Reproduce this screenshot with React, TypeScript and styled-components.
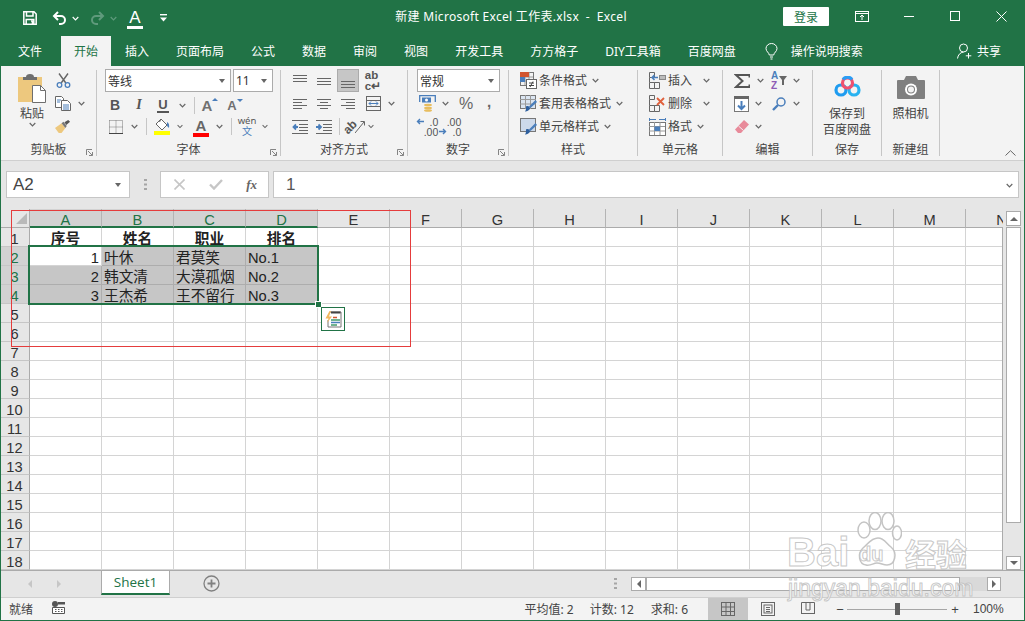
import React from "react";
import styled, { createGlobalStyle } from "styled-components";

const GREEN = "#217346";
const BLUE = "#4a7ebb";
const CJK = `"Noto Sans", "Noto Sans CJK SC", sans-serif`;
const CELLFONT = `"Liberation Sans", "Noto Sans CJK SC", sans-serif`;

const Global = createGlobalStyle`
  html, body { margin: 0; padding: 0; background: #fff; }
  * { box-sizing: border-box; }
  body { font-family: ${CJK}; font-size: 12px; }
`;

const Window = styled.div`
  position: relative; width: 1025px; height: 621px; overflow: hidden;
  display: flex; flex-direction: column;
  border: 1px solid ${GREEN}; border-top: 0;
`;

/* ---------- title bar ---------- */
const TitleBar = styled.div`
  height: 36px; background: ${GREEN}; color: #fff; flex: none; margin: 0 -1px;
  display: grid; grid-template-columns: 1fr auto 1fr; align-items: center;
`;
const Qat = styled.div`display: flex; align-items: center; padding-left: 23px;`;
const QatSlot = styled.span<{ $w: number; $ml?: number }>`
  width: ${p => p.$w}px; margin-left: ${p => p.$ml ?? 0}px; height: 20px;
  display: flex; align-items: center; justify-content: center; flex: none;
`;
const QatLetter = styled.span`
  font-family: "Liberation Sans", sans-serif; font-size: 17px; line-height: 15px; height: 19px; width: 16px;
  border-bottom: 3px solid #fff; text-align: center; color: #fff; margin-top: 2px;
`;
const WindowTitle = styled.div`font-size: 12px; white-space: pre; color: #fff; letter-spacing: .3px; margin: -5px 3px 0 0;`;
const WinControls = styled.div`display: flex; align-items: center; justify-content: flex-end; height: 100%;`;
const Login = styled.div`
  width: 46px; height: 19px; background: #fff; color: ${GREEN}; font-size: 12px; border-radius: 1px;
  display: flex; align-items: center; justify-content: center; margin-top: -3px;
`;
const WinBtn = styled.div<{ $w: number; $ml?: number }>`
  width: ${p => p.$w}px; margin-left: ${p => p.$ml ?? 0}px; display: flex; justify-content: center; margin-top: -4px;
`;

/* ---------- tabs ---------- */
const TabBar = styled.div`
  height: 30px; background: ${GREEN}; flex: none; display: flex; margin: 0 -1px; padding-left: 5px; gap: 1px;
`;
const Tab = styled.div<{ $on?: boolean; $ml?: number }>`
  padding: 0 13px; height: 30px; display: flex; align-items: center; white-space: nowrap;
  font-size: 12px; margin-left: ${p => p.$ml ?? 0}px;
  color: ${p => (p.$on ? GREEN : "#fff")}; background: ${p => (p.$on ? "#f3f3f3" : "transparent")};
`;
const TellMe = styled.div`display: flex; align-items: center; gap: 13px; color: #fff; font-size: 12px; margin-left: 15px;`;
const Share = styled.div`display: flex; align-items: center; gap: 5px; color: #fff; font-size: 12px; margin-left: auto; margin-right: 24px;`;

/* ---------- ribbon ---------- */
const Ribbon = styled.div`
  position: relative; height: 95px; flex: none; background: #f3f3f3; display: flex;
  border-bottom: 1px solid #cfcfcf;
`;
const Group = styled.div<{ $w: number }>`
  position: relative; width: ${p => p.$w}px; height: 94px; flex: none; padding-top: 3px;
  display: flex; flex-direction: column;
`;
const GroupBody = styled.div`height: 72px; flex: none;`;
const GroupLabel = styled.div`height: 17px; line-height: 18px; text-align: center; color: #444; font-size: 12px;`;
const Launcher = styled.span`position: absolute; right: 3px; bottom: 4px; width: 7px; height: 7px; display: flex;`;
const GroupSep = styled.div`width: 1px; height: 86px; margin-top: 4px; background: #c6c6c6; flex: none;`;
const Collapse = styled.span`position: absolute; right: 8px; bottom: 4px; display: flex;`;
const Row = styled.div<{ $h?: number; $pl?: number; $mt?: number }>`
  display: flex; align-items: center; height: ${p => p.$h ?? 23}px; padding-left: ${p => p.$pl ?? 0}px;
  margin-top: ${p => p.$mt ?? 0}px;
`;
const Tool = styled.span<{ $w: number; $ml?: number; $on?: boolean }>`
  width: ${p => p.$w}px; margin-left: ${p => p.$ml ?? 0}px; height: ${p => (p.$on ? "23px" : "100%")};
  display: flex; align-items: center; justify-content: center; flex: none; color: #555;
  background: ${p => (p.$on ? "#c6c6c6" : "transparent")}; ${p => (p.$on ? "border: 1px solid #ababab;" : "")}
`;
const VSep = styled.span<{ $ml: number }>`
  width: 1px; height: 17px; background: #c6c6c6; margin-left: ${p => p.$ml}px; flex: none;
`;
const ToolText = styled.span`color: #444; font-size: 12px; white-space: nowrap; margin: -1px 0 0 2px;`;
const Caret = styled.span<{ $ml?: number; $w?: number }>`
  width: ${p => p.$w ?? 8}px; margin-left: ${p => p.$ml ?? 0}px; display: flex; justify-content: center; flex: none;
`;
const SplitCols = styled.div`display: flex; padding-left: 8px;`;
const LargeCol = styled.div<{ $w: number }>`
  width: ${p => p.$w}px; display: flex; flex-direction: column; align-items: center; flex: none;
`;
const LargeText = styled.div`font-size: 12px; color: #444; line-height: 16px; text-align: center;`;
const LargeIcon = styled.div<{ $h: number; $pt: number }>`
  height: ${p => p.$h}px; padding-top: ${p => p.$pt}px; display: flex; justify-content: center;
`;
const ComboBox = styled.div<{ $w: number; $ml?: number }>`
  width: ${p => p.$w}px; height: 23px; margin-left: ${p => p.$ml ?? 0}px; background: #fff; border: 1px solid #ababab;
  display: flex; align-items: center; justify-content: space-between; padding: 0 4px 0 2px; color: #333; font-size: 12px;
`;
const Triangle = styled.span`
  width: 0; height: 0; border-left: 3.5px solid transparent; border-right: 3.5px solid transparent;
  border-top: 4px solid #666; flex: none; margin-right: 1px;
`;
const BoldB = styled.span`font-family: "Liberation Sans", sans-serif; font-weight: 700; font-size: 14px; color: #555;`;
const Italic = styled.span`font-family: "Liberation Serif", serif; font-style: italic; font-weight: 700; font-size: 14px; color: #555;`;
const Under = styled.span`font-family: "Liberation Sans", sans-serif; font-weight: 700; font-size: 13px; color: #555; border-bottom: 2px solid #555; line-height: 13px; padding: 0 1px;`;
const GrowA = styled.span<{ $s: number }>`
  font-family: "Liberation Sans", sans-serif; font-size: ${p => p.$s}px; color: #707070; font-weight: 700; line-height: 1; display: inline-flex; align-items: flex-start;
`;
const ColorA = styled.span<{ $c: string }>`
  font-family: "Liberation Sans", sans-serif; font-weight: 700; font-size: 15px; line-height: 14px; color: #666; width: 16px; text-align: center;
  border-bottom: 4px solid ${p => p.$c}; display: block; margin-top: 3px;
`;
const Pinyin = styled.span`
  display: flex; flex-direction: column; align-items: center; font-size: 9.5px; line-height: 11px; color: #555; margin-top: -1px;
`;
const PinyinZi = styled.span`color: ${BLUE}; font-size: 10px; line-height: 11px;`;
const WrapText = styled.span`
  display: flex; flex-direction: column; font-family: "Liberation Sans", sans-serif; font-size: 11.5px; line-height: 11px; color: #555; font-weight: 700;
`;
const Percent = styled.span`font-family: "Liberation Sans", sans-serif; font-size: 16px; color: #666; font-weight: 400;`;
const Comma = styled.span`font-family: "Liberation Sans", sans-serif; font-size: 15px; font-weight: 700; color: #666; margin-top: -5px;`;
const DecBox = styled.span`
  display: grid; grid-template-columns: 8px auto; font-family: "Liberation Sans", sans-serif; font-size: 10.5px; line-height: 10px; color: #555; justify-items: end; align-items: center;
`;
const SortLetters = styled.span`display: flex; flex-direction: column; font-family: "Liberation Sans", sans-serif; font-size: 10px; line-height: 10px; font-weight: 700; margin-right: 1px;`;
const SortA = styled.span`color: ${BLUE};`;
const SortZ = styled.span`color: #8e5bb5;`;

/* ---------- formula bar ---------- */
const FormulaZone = styled.div`
  height: 48px; flex: none; background: #e6e6e6; display: flex; padding: 10px 5px 0 5px;
`;
const FieldBase = styled.div`
  height: 27px; background: #fff; border: 1px solid #c6c6c6; display: flex; align-items: center;
`;
const NameBox = styled(FieldBase)`
  width: 124px; justify-content: space-between; padding: 0 7px 0 6px; font-family: "Liberation Sans", sans-serif; font-size: 17px; color: #444;
`;
const Dots = styled.div`width: 30px; height: 27px; display: flex; align-items: center; justify-content: center;`;
const FxBox = styled(FieldBase)`width: 109px; justify-content: space-between; padding: 0 11px 0 13px;`;
const FxText = styled.span`font-family: "Liberation Serif", serif; font-style: italic; font-weight: 700; font-size: 13px; color: #666;`;
const FormulaInput = styled(FieldBase)`
  flex: 1; margin-left: 4px; justify-content: space-between; padding: 1px 5px 0 12px; font-family: "Liberation Sans", sans-serif; font-size: 17px; color: #555;
`;

/* ---------- sheet ---------- */
const SheetZone = styled.div`height: 361px; flex: none; display: flex; background: #e6e6e6;`;
const GridWrap = styled.div`
  position: relative; width: 1002px; height: 361px; overflow: hidden; flex: none;
  &::after { content: ""; position: absolute; right: 0; top: 19px; bottom: 0; width: 1px; background: #ababab; }
`;
const SheetGrid = styled.div`
  display: grid; grid-template-columns: 29px repeat(14, 72px); grid-auto-rows: 19px; width: 1037px;
  font-family: ${CELLFONT}; font-size: 14.67px; background: #fff;
`;
const Corner = styled.div`
  background: #e6e6e6; border-right: 1px solid #ababab; border-bottom: 1px solid #ababab; padding: 4px 0 0 15px;
  &::before { content: ""; display: block; width: 0; height: 0; border-left: 11px solid transparent; border-bottom: 11px solid #b9b9b9; }
`;
const ColHead = styled.div<{ $on?: boolean }>`
  background: ${p => (p.$on ? "#d2d2d2" : "#e6e6e6")}; color: ${p => (p.$on ? GREEN : "#333")};
  border-right: 1px solid #b4b4b4; text-align: center; line-height: 22px; overflow: hidden;
  border-bottom: ${p => (p.$on ? `2px solid ${GREEN}` : "1px solid #ababab")};
`;
const RowHead = styled.div<{ $on?: boolean }>`
  background: ${p => (p.$on ? "#d2d2d2" : "#e6e6e6")}; color: ${p => (p.$on ? GREEN : "#333")};
  border-right: 1px solid #ababab; border-bottom: 1px solid #c6c6c6; text-align: center; line-height: 23px; padding-right: 1px; overflow: hidden;
`;
const Cell = styled.div<{ $sel?: boolean; $right?: boolean; $head?: boolean }>`
  background: ${p => (p.$sel ? "#c6c6c6" : "#fff")};
  border-right: 1px solid ${p => (p.$sel ? "#adadad" : "#d4d4d4")};
  border-bottom: 1px solid ${p => (p.$sel ? "#adadad" : "#d4d4d4")};
  color: #222; white-space: nowrap; overflow: hidden; line-height: 23px; padding: 0 2px;
  text-align: ${p => (p.$head ? "center" : p.$right ? "right" : "left")};
  font-weight: ${p => (p.$head ? 700 : 400)};
`;
const Selection = styled.div`
  position: absolute; left: 27px; top: 36px; width: 291px; height: 60px; border: 2px solid ${GREEN}; pointer-events: none;
`;
const FillHandle = styled.span`
  position: absolute; right: -5px; bottom: -5px; width: 7px; height: 7px; background: ${GREEN}; border: 1px solid #fff;
`;
const QuickAnalysis = styled.div`
  position: absolute; left: 320px; top: 98px; width: 24px; height: 24px; background: #fff; border: 1px solid ${GREEN};
  display: flex; align-items: center; justify-content: center;
`;
const RedFrame = styled.div`
  position: absolute; left: 10px; top: 1px; width: 400px; height: 137px; border: 1px solid #e53c3c; pointer-events: none;
`;
const VScroll = styled.div`
  width: 21px; flex: none; display: flex; flex-direction: column; padding: 2px 0 0 3px;
`;
const ScrollBtn = styled.div<{ $w: number; $h: number }>`
  width: ${p => p.$w}px; height: ${p => p.$h}px; background: #fff; border: 1px solid #ababab; flex: none;
  display: flex; align-items: center; justify-content: center;
`;
const VThumb = styled.div`width: 15px; height: 296px; margin-top: 1px; background: #fff; border: 1px solid #ababab; flex: none;`;
const Arrow = styled.span<{ $d: "up" | "down" | "left" | "right"; $c?: string; $s?: number }>`
  width: 0; height: 0; display: block; border: ${p => p.$s ?? 4}px solid transparent;
  ${p => {
    const c = p.$c ?? "#666";
    if (p.$d === "up") return `border-bottom-color:${c}; border-top-width:0;`;
    if (p.$d === "down") return `border-top-color:${c}; border-bottom-width:0;`;
    if (p.$d === "left") return `border-right-color:${c}; border-left-width:0;`;
    return `border-left-color:${c}; border-right-width:0;`;
  }}
`;

/* ---------- sheet tab bar ---------- */
const SheetBar = styled.div`
  height: 28px; flex: none; background: #e6e6e6; border-top: 1px solid #ababab; display: flex; align-items: flex-start; border-bottom: 1px solid #cfcfcf;
`;
const NavArrow = styled.span<{ $w: number; $ml?: number }>`
  width: ${p => p.$w}px; margin-left: ${p => p.$ml ?? 0}px; height: 25px; display: flex; align-items: center; justify-content: center; flex: none;
`;
const SheetTab = styled.div`
  width: 69px; height: 24px; margin-left: 37px; background: #fff; border-left: 1px solid #ababab; border-right: 1px solid #ababab; border-bottom: 2px solid ${GREEN};
  color: ${GREEN}; font-size: 13.5px; display: flex; align-items: center; justify-content: center; flex: none; font-family: "Open Sans", sans-serif;
`;
const HScroll = styled.div`display: flex; margin: 6px 0 0 14px; width: 370px; background: #d9d9d9;`;
const HThumb = styled.div`width: 314px; height: 14px; background: #fff; border: 1px solid #ababab; flex: none;`;
const HSpacer = styled.div`flex: 1;`;

/* ---------- status bar ---------- */
const StatusBar = styled.div`
  flex: 1; background: #f3f3f3; display: flex; align-items: center; font-size: 12px; color: #444; padding-left: 8px;
`;
const Stat = styled.span<{ $ml?: number }>`margin-left: ${p => p.$ml ?? 0}px; white-space: nowrap; font-size: 12px;`;
const Spacer = styled.div`flex: 1;`;
const ViewBtn = styled.div<{ $on?: boolean; $ml?: number }>`
  width: 40px; height: 100%; margin-left: ${p => p.$ml ?? 0}px; display: flex; align-items: center; justify-content: center; flex: none;
  background: ${p => (p.$on ? "#c6c6c6" : "transparent")};
`;
const ZoomSign = styled.span<{ $w: number; $ml?: number }>`
  width: ${p => p.$w}px; margin-left: ${p => p.$ml ?? 0}px; display: flex; justify-content: center; flex: none; font-family: "Liberation Sans", sans-serif; font-size: 13px; color: #444;
`;
const Slider = styled.div`
  width: 100px; height: 12px; flex: none; margin-left: 2px; padding-left: 48px;
  background: linear-gradient(#a6a6a6, #a6a6a6) center / 100% 1px no-repeat;
`;
const SliderThumb = styled.div`width: 5px; height: 12px; background: #5f5f5f;`;
const Percent100 = styled.span`width: 30px; margin: 0 21px 0 13px; font-family: "Liberation Sans", sans-serif; font-size: 12px; flex: none; color: #444;`;

/* ---------- watermark ---------- */
const Watermark = styled.div`
  position: absolute; left: 786px; top: 512px; width: 190px; height: 90px; pointer-events: none;
  -webkit-text-stroke: 1px rgba(190,190,190,.85); color: rgba(255,255,255,.82); font-family: "Liberation Sans", sans-serif; font-weight: 700;
`;
const WmBai = styled.span`position: absolute; left: 0; top: 17px; font-size: 40px; line-height: 46px;`;
const WmDu = styled.span`position: absolute; left: 72px; top: 30px; font-size: 20px; line-height: 24px;`;
const WmJing = styled.span`position: absolute; left: 118px; top: 20px; font-size: 31px; line-height: 42px; font-family: "Noto Sans CJK SC", sans-serif;`;
const WmUrl = styled.span`position: absolute; left: 1px; top: 63px; font-size: 23px; line-height: 26px; font-weight: 400; white-space: nowrap;`;
const WmPaw = styled.svg`position: absolute; left: 67px; top: 0;`;

/* ---------- icons ---------- */
const Chev = ({ c = "#666" }: { c?: string }) => (
  <svg width="7" height="5" viewBox="0 0 7 5"><path d="M.7 1 3.5 3.8 6.3 1" fill="none" stroke={c} strokeWidth="1.2" /></svg>
);
const SaveIcon = () => (
  <svg width="14" height="14" viewBox="0 0 14 14" fill="none" stroke="#fff" strokeWidth="1.5">
    <path d="M.8.8h10.2l2.2 2.2v10.2H.8z" /><path d="M3.5 1v4h6.5V1M3.2 13V8.5h7.6V13" /><path d="M8 10h1.4v3" />
  </svg>
);
const UndoIcon = ({ c, flip }: { c: string; flip?: boolean }) => (
  <svg width="15" height="14" viewBox="0 0 15 14" fill="none" stroke={c} strokeWidth="2" style={flip ? { transform: "scaleX(-1)" } : undefined}>
    <path d="M6 1 2 5l4 4" /><path d="M2.5 5H9a4 4 0 0 1 0 8H7" />
  </svg>
);
const QatMore = () => (
  <svg width="7" height="8" viewBox="0 0 7 8" fill="#fff"><rect x="0" y="0" width="7" height="1.4" /><path d="M0 3.4h7L3.5 7.4z" /></svg>
);
const DisplayIcon = () => (
  <svg width="14" height="11" viewBox="0 0 14 11" fill="none" stroke="#fff"><rect x=".5" y=".5" width="13" height="10" /><path d="M0 2.5h14" /><path d="M7 9V4M5 6l2-2 2 2" /></svg>
);
const MinIcon = () => (<svg width="10" height="10" viewBox="0 0 10 10"><path d="M0 5.5h10" stroke="#fff" /></svg>);
const MaxIcon = () => (<svg width="10" height="10" viewBox="0 0 10 10"><rect x=".5" y=".5" width="9" height="9" fill="none" stroke="#fff" /></svg>);
const CloseIcon = () => (<svg width="11" height="11" viewBox="0 0 11 11"><path d="M.5.5l10 10M10.5.5l-10 10" stroke="#fff" /></svg>);
const BulbIcon = () => (
  <svg width="13" height="17" viewBox="0 0 13 17" fill="none" stroke="#fff"><path d="M4.3 12C4 9.5 1 8.5 1 5.5a5.5 5 0 0 1 11 0c0 3-3 4-3.3 6.5z" /><path d="M5 14h3M5.5 16h2" /></svg>
);
const PersonIcon = () => (
  <svg width="15" height="16" viewBox="0 0 15 16" fill="none" stroke="#fff"><circle cx="6.5" cy="5" r="4" /><path d="M.5 15.5c.5-3.5 2.500-6 6-6.500" /><path d="M11.5 10v5.5M8.8 12.800h5.500" /></svg>
);
const PasteIcon = () => (
  <svg width="28" height="29" viewBox="0 0 28 29">
    <path d="M0 3h24v25H0z" fill="#edc87e" />
    <path d="M5 3h3c0-2 1.5-3 4-3s4 1 4 3h3v3H5z" fill="#6e6e6e" />
    <path d="M14.5 11.5h8l5 5v12h-13z" fill="#fff" stroke="#6e6e6e" />
    <path d="M22.5 11.5v5h5" fill="none" stroke="#6e6e6e" />
  </svg>
);
const ScissorsIcon = () => (
  <svg width="15" height="15" viewBox="0 0 15 15" fill="none">
    <path d="M3 .5 9.8 10M12 .5 5.2 10" stroke="#666" strokeWidth="1.4" />
    <circle cx="3.5" cy="12" r="2.3" stroke={BLUE} strokeWidth="1.3" /><circle cx="11.5" cy="12" r="2.3" stroke={BLUE} strokeWidth="1.3" />
  </svg>
);
const CopyIcon = () => (
  <svg width="16" height="15" viewBox="0 0 16 15" fill="#fff">
    <path d="M.5.5h6l2 2v9h-8z" stroke="#666" /><path d="M6.500 4.500h6l3 3v7h-9z" stroke="#666" />
    <path d="M8 9h6M8 11h6M8 13h6M2 4h4M2 6h3" stroke={BLUE} />
  </svg>
);
const BrushIcon = () => (
  <svg width="17" height="15" viewBox="0 0 17 15">
    <path d="M0 9 7 4l4 5-4 5.500H4z" fill="#edc87e" /><path d="M7 4l2-1.500 3.500 4.500L11 9z" fill="#777" /><path d="M10 3 14 .5 16 2.500 12 6z" fill="#555" />
  </svg>
);
const LaunchIcon = () => (
  <svg width="7" height="7" viewBox="0 0 7 7" fill="none" stroke="#777" strokeWidth=".9"><path d="M.5 6V.5H6" /><path d="M2 2l4.200 4.200M6.500 3v3.500H3" /></svg>
);
const BorderIcon = () => (
  <svg width="14" height="14" viewBox="0 0 14 14" fill="none"><path d="M.5.5h13v13M.5.5v13M7 .5v13M.5 7h13" stroke="#777" strokeDasharray="1 1" /><path d="M0 13.5h14" stroke="#444" /></svg>
);
const FillIcon = () => (
  <svg width="16" height="18" viewBox="0 0 16 18">
    <path d="M7 1l6 6-5 5-6-6z" fill="#fff" stroke="#666" /><path d="M7 1l-1.500 3" stroke="#666" fill="none" />
    <path d="M13 4c2 1 2.500 3 2 6-1-1-2-1.500-2-3z" fill={BLUE} /><rect x="0" y="13" width="16" height="4" fill="#ffff00" />
  </svg>
);
const LinesIcon = ({ rows }: { rows: Array<[number, number, number]> }) => (
  <svg width="14" height="14" viewBox="0 0 14 14" stroke="#666">{rows.map(([a, b, y], i) => <path key={i} d={`M${a} ${y}.5H${b}`} />)}</svg>
);
const MergeIcon = () => (
  <svg width="15" height="15" viewBox="0 0 15 15" fill="none" stroke="#666"><rect x=".5" y=".5" width="14" height="14" /><path d="M0 4.500h15M0 10.500h15" /><path d="M3 7.500h9M5 5.500l-2 2 2 2M10 5.500l2 2-2 2" stroke={BLUE} fill="none" /></svg>
);
const IndentIcon = ({ rev }: { rev?: boolean }) => (
  <svg width="16" height="14" viewBox="0 0 16 14" fill="none">
    <path d="M0 .5h16M7 4.500h9M7 7.500h9M7 10.500h9M0 13.500h16" stroke="#666" />
    {rev ? <path d="M6 7H2M4 4.500 1.500 7 4 9.500" stroke={BLUE} strokeWidth="1.8" /> : <path d="M0 7h4.500M2.500 4.500 5 7 2.500 9.500" stroke={BLUE} strokeWidth="1.8" />}
  </svg>
);
const OrientText = styled.span`
  display: inline-block; transform: rotate(-45deg); font-family: "Liberation Sans", sans-serif; font-size: 12px; font-weight: 700; color: #555; line-height: 12px;
`;
const OrientLine = () => (
  <svg width="10" height="14" viewBox="0 0 10 14" fill="none" stroke="#666" style={{ marginLeft: -3 }}><path d="M0 13 9 2M5.500 1.500H9.500V5.500" /></svg>
);
const CurrencyIcon = () => (
  <svg width="17" height="17" viewBox="0 0 17 17">
    <path d="M.7 7V.7h15.600V7" fill="none" stroke={BLUE} strokeWidth="1.3" />
    <rect x="3" y="2.500" width="9" height="5" fill={BLUE} /><circle cx="7.500" cy="5" r="1.500" fill="#fff" />
    <ellipse cx="9" cy="10" rx="4" ry="1.300" fill="#e8bd5e" /><ellipse cx="9" cy="13" rx="4" ry="1.300" fill="#e8bd5e" /><ellipse cx="9" cy="15.500" rx="4" ry="1.300" fill="#e8bd5e" />
  </svg>
);
const MiniArrow = ({ left }: { left?: boolean }) => (
  <svg width="8" height="7" viewBox="0 0 8 7" fill="none" stroke={BLUE} strokeWidth="1.4">{left ? <path d="M8 3.500H1.500M4 1 1.500 3.500 4 6" /> : <path d="M0 3.500h6.500M4 1l2.500 2.500L4 6" />}</svg>
);
const CondIcon = () => (
  <svg width="17" height="17" viewBox="0 0 17 17" fill="none">
    <rect x=".5" y=".5" width="13" height="13" stroke="#777" /><path d="M0 5h13M5 0v13M9 0v13M0 9h13" stroke="#999" />
    <rect x="0" y="0" width="9" height="5" fill="#d2552f" /><rect x="0" y="5" width="5" height="5" fill="#4a7ebb" />
    <rect x="6.500" y="7.500" width="10" height="9" fill="#fff" stroke="#666" /><path d="M9 11h5M9 13.500h5M10 15l3-5.500" stroke="#444" />
  </svg>
);
const TableIcon = ({ plain }: { plain?: boolean }) => (
  <svg width="17" height="17" viewBox="0 0 17 17" fill="none">
    <rect x=".5" y=".5" width="15" height="13" fill="#fff" stroke="#777" />
    <rect x="1" y="1" width="14" height="12" fill={plain ? "#cdd9ea" : "#dbe5f1"} />
    {!plain && <path d="M5.500 0v14M10.500 0v14M0 4.500h16M0 9h16" stroke="#9a9a9a" />}
    <path d="M15.500 5 9 11.500l1.500 1.500L17 7z" fill={BLUE} /><path d="M6 11.500c2-1 3.500 0 4 1.500 0 2-3 3.500-5 3.500 1-1 1-3 1-5z" fill="#2e5f9e" />
  </svg>
);
const InsertIcon = () => (
  <svg width="17" height="17" viewBox="0 0 17 17" fill="none" stroke="#666">
    <path d="M.5.5h5v5h-5zM.5 10.500h5v6h-5zM5.500 10.500h5v6h-5zM.5 5.500v5" />
    <rect x="10.500" y="3.500" width="6" height="4" fill="#bbb" stroke="#888" />
    <path d="M9 5.500H3M5.500 3 3 5.500 5.500 8" stroke={BLUE} strokeWidth="1.5" />
  </svg>
);
const DeleteIcon = () => (
  <svg width="17" height="17" viewBox="0 0 17 17" fill="none" stroke="#666">
    <path d="M.5.5h5v4h-5zM.5 10.500h5v6h-5zM5.500 10.500h5v6h-5zM.5 4.500v6" />
    <path d="M8 3l7 7M15 3l-7 7" stroke="#e0603c" strokeWidth="1.8" />
  </svg>
);
const FormatIcon = () => (
  <svg width="17" height="18" viewBox="0 0 17 18" fill="none" stroke="#777">
    <path d="M1 1.500h6M10 1.500h6" stroke={BLUE} /><path d="M.5 0v3M16.500 0v3" stroke={BLUE} />
    <rect x=".5" y="4.500" width="16" height="13" fill="#fff" /><path d="M0 8.500h16M0 13h16M5.500 4v13M11 4v13" stroke="#999" />
    <rect x="5.500" y="8.500" width="5.500" height="4.500" fill={BLUE} stroke="none" />
  </svg>
);
const SigmaIcon = () => (
  <svg width="16" height="14" viewBox="0 0 16 14" fill="none" stroke="#555" strokeWidth="2"><path d="M15.500 3.500V1H2l6.500 6L2 13h13.500v-2.500" /></svg>
);
const FillDownIcon = () => (
  <svg width="15" height="16" viewBox="0 0 15 16">
    <rect x=".5" y=".5" width="14" height="15" fill="#fff" stroke="#777" /><rect x="0" y="0" width="15" height="3" fill="#666" />
    <path d="M7.500 5v8M4 9.500l3.500 3.500L11 9.500" fill="none" stroke={BLUE} strokeWidth="2" />
  </svg>
);
const FunnelIcon = () => (<svg width="8" height="9" viewBox="0 0 8 9"><path d="M0 0h8L5 4v5H3V4z" fill="#666" /></svg>);
const FindIcon = () => (
  <svg width="14" height="14" viewBox="0 0 14 14" fill="none" stroke={BLUE}>
    <circle cx="9" cy="5" r="4" strokeWidth="1.5" /><path d="M6 8 1 13" strokeWidth="2.4" />
  </svg>
);
const EraserIcon = () => (
  <svg width="14" height="13" viewBox="0 0 14 13"><path d="M9 0l5 4.500-8 8.500H3L0 9.500z" fill="#e88a9a" /><path d="M3.500 6 8.500 10.500" stroke="#f3f3f3" /></svg>
);
const BaiduIcon = () => (
  <svg width="27" height="21" viewBox="0 0 27 21" fill="none">
    <circle cx="7" cy="14" r="5" stroke="#1f9cf0" strokeWidth="3.2" />
    <circle cx="20" cy="14" r="5" stroke="#28b2f0" strokeWidth="3.2" />
    <circle cx="13.500" cy="7" r="5" stroke="#f0506e" strokeWidth="3.2" />
    <path d="M9 3.500A5.500 5.500 0 0 1 18 3.500" stroke="#2b9df4" strokeWidth="3.2" />
  </svg>
);
const CameraIcon = () => (
  <svg width="28" height="23" viewBox="0 0 28 23">
    <path d="M1 4h6l2-4h10l2 4h6a1 1 0 0 1 1 1v17a1 1 0 0 1-1 1H1a1 1 0 0 1-1-1V5a1 1 0 0 1 1-1z" fill="#7f7f7f" />
    <circle cx="14" cy="13.500" r="6" fill="#fff" /><circle cx="14" cy="13.500" r="4" fill="#7f7f7f" /><circle cx="14" cy="13.500" r="3" fill="#f3f3f3" />
  </svg>
);
const QuickIcon = () => (
  <svg width="17" height="17" viewBox="0 0 17 17" fill="none">
    <path d="M5 1h11v15H3V9" stroke="#777" /><path d="M6 1.500h9.500" stroke="#444" strokeWidth="2" />
    <path d="M4.500 0 .5 7.500h3L2 12l5-6.500H4l2-5.500z" fill="#f2b860" />
    <path d="M8 6.500h4" stroke="#d2552f" strokeWidth="1.5" /><path d="M6 9h9" stroke="#3f9a6a" strokeWidth="1.5" /><path d="M6 11.500h9" stroke={BLUE} strokeWidth="1.5" /><path d="M6 14h6" stroke="#3f9a6a" strokeWidth="1.5" />
  </svg>
);
const XMark = () => (<svg width="11" height="11" viewBox="0 0 11 11"><path d="M.5.5l10 10M10.500.5l-10 10" stroke="#c6c6c6" strokeWidth="1.6" /></svg>);
const CheckMark = () => (<svg width="14" height="11" viewBox="0 0 14 11"><path d="M1 5.500 5 9.500 13 1" fill="none" stroke="#c6c6c6" strokeWidth="2.4" /></svg>);
const VDots = () => (<svg width="3" height="11" viewBox="0 0 3 11" fill="#a6a6a6"><rect width="3" height="2" /><rect y="4.500" width="3" height="2" /><rect y="9" width="3" height="2" /></svg>);
const PlusCircle = () => (
  <svg width="17" height="17" viewBox="0 0 17 17" fill="none" stroke="#808080"><circle cx="8.500" cy="8.500" r="7.500" strokeWidth="1.3" /><path d="M4.500 8.500h8M8.500 4.500v8" strokeWidth="1.8" /></svg>
);
const MacroIcon = () => (
  <svg width="13" height="13" viewBox="0 0 13 13"><circle cx="3" cy="3" r="3" fill="#555" /><rect x="6" y="1" width="7" height="2.500" fill="#555" /><path d="M.5 6.500h12v6H.5z" fill="#fff" stroke="#555" /><path d="M3 8.500h1.500M6 8.500h1.500M9 8.500h1.500M3 10.500h1.500M6 10.500h1.500M9 10.500h1.500" stroke="#555" /></svg>
);
const NormalView = () => (
  <svg width="14" height="14" viewBox="0 0 14 14" fill="none" stroke="#666"><rect x=".5" y=".5" width="13" height="13" /><path d="M5 0v14M9.500 0v14M0 5h14M0 9.500h14" /></svg>
);
const PageView = () => (
  <svg width="14" height="14" viewBox="0 0 14 14" fill="none" stroke="#666"><rect x=".5" y=".5" width="13" height="13" /><rect x="3" y="3" width="8" height="8" /><path d="M5 5.500h4M5 7.500h4M5 9.500h4" /></svg>
);
const BreakView = () => (
  <svg width="14" height="14" viewBox="0 0 14 14" fill="none" stroke="#666"><path d="M.5 11V.5h13V11" /><path d="M0 11.500h14M5 0v8h4V0" /></svg>
);
const PawIcon = () => (
  <WmPaw width="48" height="64" viewBox="0 0 48 64" fill="rgba(255,255,255,.75)" stroke="rgba(190,190,190,.9)" strokeWidth="1.5">
    <ellipse cx="10" cy="18" rx="6" ry="8" /><ellipse cx="21" cy="9" rx="6" ry="8.500" /><ellipse cx="34" cy="9" rx="6" ry="8.500" /><ellipse cx="43" cy="21" rx="4.500" ry="7" />
    <path d="M24 26c6 0 8 5 13 9 7 6 4 18-4 18-4 0-6-2-10-2s-6 3-11 2C5 52 3 42 9 36c5-4 8-10 15-10z" />
  </WmPaw>
);

/* ---------- data ---------- */
const COLS = "ABCDEFGHIJKLMN".split("");
const ROWS = Array.from({ length: 18 }, (_, i) => i + 1);
const DATA: Record<number, string[]> = {
  1: ["序号", "姓名", "职业", "排名"],
  2: ["1", "叶休", "君莫笑", "No.1"],
  3: ["2", "韩文清", "大漠孤烟", "No.2"],
  4: ["3", "王杰希", "王不留行", "No.3"],
};
const TABS = ["插入", "页面布局", "公式", "数据", "审阅", "视图", "开发工具", "方方格子", "DIY工具箱", "百度网盘"];
const L14: Record<string, Array<[number, number, number]>> = {
  top: [[0, 14, 1], [0, 14, 4], [0, 14, 7]],
  mid: [[0, 14, 4], [0, 14, 7], [0, 14, 10]],
  bot: [[0, 14, 7], [0, 14, 10], [0, 14, 13]],
  left: [[0, 14, 2], [0, 9, 5], [0, 14, 8], [0, 9, 11]],
  center: [[0, 14, 2], [3, 11, 5], [0, 14, 8], [3, 11, 11]],
  right: [[0, 14, 2], [5, 14, 5], [0, 14, 8], [5, 14, 11]],
};

const Launch = () => <Launcher><LaunchIcon /></Launcher>;

export default function App() {
  return (
    <Window>
      <Global />
      <TitleBar>
        <Qat>
          <QatSlot $w={14}><SaveIcon /></QatSlot>
          <QatSlot $w={15} $ml={15}><UndoIcon c="#fff" /></QatSlot>
          <QatSlot $w={8} $ml={4}><Chev c="#fff" /></QatSlot>
          <QatSlot $w={15} $ml={11}><UndoIcon c="#5f9a7c" flip /></QatSlot>
          <QatSlot $w={8} $ml={4}><Chev c="#5f9a7c" /></QatSlot>
          <QatSlot $w={16} $ml={10}><QatLetter>A</QatLetter></QatSlot>
          <QatSlot $w={8} $ml={16}><QatMore /></QatSlot>
        </Qat>
        <WindowTitle>新建 Microsoft Excel 工作表.xlsx  -  Excel</WindowTitle>
        <WinControls>
          <Login>登录</Login>
          <WinBtn $w={14} $ml={26}><DisplayIcon /></WinBtn>
          <WinBtn $w={10} $ml={35}><MinIcon /></WinBtn>
          <WinBtn $w={10} $ml={36}><MaxIcon /></WinBtn>
          <WinBtn $w={11} $ml={36}><CloseIcon /></WinBtn>
          <WinBtn $w={18} />
        </WinControls>
      </TitleBar>

      <TabBar>
        <Tab>文件</Tab>
        <Tab $on $ml={5}>开始</Tab>
        {TABS.map(t => <Tab key={t}>{t}</Tab>)}
        <TellMe><BulbIcon /><span>操作说明搜索</span></TellMe>
        <Share><PersonIcon /><span>共享</span></Share>
      </TabBar>

      <Ribbon>
        <Group $w={95}>
          <GroupBody>
            <SplitCols>
              <LargeCol $w={46}>
                <LargeIcon $h={37} $pt={5}><PasteIcon /></LargeIcon>
                <LargeText>粘贴</LargeText>
                <Caret $w={8}><Chev /></Caret>
              </LargeCol>
              <div>
                <Row><Tool $w={16}><ScissorsIcon /></Tool></Row>
                <Row><Tool $w={16}><CopyIcon /></Tool><Caret $ml={6}><Chev /></Caret></Row>
                <Row><Tool $w={16}><BrushIcon /></Tool></Row>
              </div>
            </SplitCols>
          </GroupBody>
          <GroupLabel>剪贴板</GroupLabel>
          <Launch />
        </Group>
        <GroupSep />

        <Group $w={183}>
          <GroupBody>
            <Row $pl={8}>
              <ComboBox $w={126}><span>等线</span><Triangle /></ComboBox>
              <ComboBox $w={40} $ml={2}><span>11</span><Triangle /></ComboBox>
            </Row>
            <Row $pl={6} $h={20} $mt={3}>
              <Tool $w={24}><BoldB>B</BoldB></Tool>
              <Tool $w={24}><Italic>I</Italic></Tool>
              <Tool $w={24}><Under>U</Under></Tool>
              <Tool $w={14}><Chev /></Tool>
              <VSep $ml={5} />
              <Tool $w={22} $ml={4}><GrowA $s={15}>A<Arrow $d="up" $c={BLUE} $s={3} /></GrowA></Tool>
              <Tool $w={28}><GrowA $s={13}>A<Arrow $d="down" $c={BLUE} $s={3} /></GrowA></Tool>
            </Row>
            <Row $pl={6} $h={21} $mt={1}>
              <Tool $w={26}><BorderIcon /></Tool>
              <Tool $w={10}><Chev /></Tool>
              <VSep $ml={7} />
              <Tool $w={30}><FillIcon /></Tool>
              <Tool $w={6}><Chev /></Tool>
              <Tool $w={24} $ml={6}><ColorA $c="#ff0000">A</ColorA></Tool>
              <Tool $w={12}><Chev /></Tool>
              <VSep $ml={6} />
              <Tool $w={30}><Pinyin><span>wén</span><PinyinZi>文</PinyinZi></Pinyin></Tool>
              <Tool $w={6}><Chev /></Tool>
            </Row>
          </GroupBody>
          <GroupLabel>字体</GroupLabel>
          <Launch />
        </Group>
        <GroupSep />

        <Group $w={126}>
          <GroupBody>
            <Row $pl={7}>
              <Tool $w={24}><LinesIcon rows={L14.top} /></Tool>
              <Tool $w={24}><LinesIcon rows={L14.mid} /></Tool>
              <Tool $w={22} $ml={1} $on><LinesIcon rows={L14.bot} /></Tool>
              <Tool $w={28}><WrapText><span>ab</span><span>c↵</span></WrapText></Tool>
            </Row>
            <Row $pl={7}>
              <Tool $w={24}><LinesIcon rows={L14.left} /></Tool>
              <Tool $w={24}><LinesIcon rows={L14.center} /></Tool>
              <Tool $w={24}><LinesIcon rows={L14.right} /></Tool>
              <Tool $w={26}><MergeIcon /></Tool>
              <Tool $w={10}><Chev /></Tool>
            </Row>
            <Row $pl={7}>
              <Tool $w={24}><IndentIcon rev /></Tool>
              <Tool $w={24}><IndentIcon /></Tool>
              <VSep $ml={3} />
              <Tool $w={28}><OrientText>ab</OrientText><OrientLine /></Tool>
              <Tool $w={6}><Chev /></Tool>
            </Row>
          </GroupBody>
          <GroupLabel>对齐方式</GroupLabel>
          <Launch />
        </Group>
        <GroupSep />

        <Group $w={100}>
          <GroupBody>
            <Row $pl={9}><ComboBox $w={83}><span>常规</span><Triangle /></ComboBox></Row>
            <Row $pl={9}>
              <Tool $w={20}><CurrencyIcon /></Tool>
              <Tool $w={16}><Chev /></Tool>
              <Tool $w={26}><Percent>%</Percent></Tool>
              <Tool $w={20}><Comma>,</Comma></Tool>
            </Row>
            <Row $pl={7}>
              <Tool $w={24}><DecBox><MiniArrow left /><span>.0</span><span /><span>.00</span></DecBox></Tool>
              <Tool $w={22}><DecBox><span /><span>.00</span><MiniArrow /><span>.0</span></DecBox></Tool>
            </Row>
          </GroupBody>
          <GroupLabel>数字</GroupLabel>
          <Launch />
        </Group>
        <GroupSep />

        <Group $w={128}>
          <GroupBody>
            <Row $pl={10}><Tool $w={18}><CondIcon /></Tool><ToolText>条件格式</ToolText><Caret $ml={4}><Chev /></Caret></Row>
            <Row $pl={10}><Tool $w={18}><TableIcon /></Tool><ToolText>套用表格格式</ToolText><Caret $ml={4}><Chev /></Caret></Row>
            <Row $pl={10}><Tool $w={18}><TableIcon plain /></Tool><ToolText>单元格样式</ToolText><Caret $ml={4}><Chev /></Caret></Row>
          </GroupBody>
          <GroupLabel>样式</GroupLabel>
        </Group>
        <GroupSep />

        <Group $w={84}>
          <GroupBody>
            <Row $pl={10}><Tool $w={18}><InsertIcon /></Tool><ToolText>插入</ToolText><Caret $ml={10}><Chev /></Caret></Row>
            <Row $pl={10}><Tool $w={18}><DeleteIcon /></Tool><ToolText>删除</ToolText><Caret $ml={10}><Chev /></Caret></Row>
            <Row $pl={10}><Tool $w={18}><FormatIcon /></Tool><ToolText>格式</ToolText><Caret $ml={4}><Chev /></Caret></Row>
          </GroupBody>
          <GroupLabel>单元格</GroupLabel>
        </Group>
        <GroupSep />

        <Group $w={89}>
          <GroupBody>
            <Row $pl={8}>
              <Tool $w={22}><SigmaIcon /></Tool>
              <Tool $w={10} $ml={2}><Chev /></Tool>
              <Tool $w={24} $ml={2}><SortLetters><SortA>A</SortA><SortZ>Z</SortZ></SortLetters><FunnelIcon /></Tool>
              <Tool $w={10}><Chev /></Tool>
            </Row>
            <Row $pl={8}>
              <Tool $w={20}><FillDownIcon /></Tool>
              <Tool $w={10} $ml={2}><Chev /></Tool>
              <Tool $w={24} $ml={4}><FindIcon /></Tool>
              <Tool $w={10}><Chev /></Tool>
            </Row>
            <Row $pl={8}>
              <Tool $w={22}><EraserIcon /></Tool>
              <Tool $w={10}><Chev /></Tool>
            </Row>
          </GroupBody>
          <GroupLabel>编辑</GroupLabel>
        </Group>
        <GroupSep />

        <Group $w={68}>
          <GroupBody>
            <LargeCol $w={68}>
              <LargeIcon $h={37} $pt={7}><BaiduIcon /></LargeIcon>
              <LargeText>保存到<br />百度网盘</LargeText>
            </LargeCol>
          </GroupBody>
          <GroupLabel>保存</GroupLabel>
        </Group>
        <GroupSep />

        <Group $w={57}>
          <GroupBody>
            <LargeCol $w={57}>
              <LargeIcon $h={37} $pt={7}><CameraIcon /></LargeIcon>
              <LargeText>照相机</LargeText>
            </LargeCol>
          </GroupBody>
          <GroupLabel>新建组</GroupLabel>
        </Group>
        <GroupSep />
        <Collapse><svg width="11" height="6" viewBox="0 0 11 6"><path d="M.5 5.500 5.500 .7l5 4.800" fill="none" stroke="#666" /></svg></Collapse>
      </Ribbon>

      <FormulaZone>
        <NameBox><span>A2</span><Triangle /></NameBox>
        <Dots><VDots /></Dots>
        <FxBox><XMark /><CheckMark /><FxText>fx</FxText></FxBox>
        <FormulaInput><span>1</span><Chev /></FormulaInput>
      </FormulaZone>

      <SheetZone>
        <GridWrap>
          <SheetGrid>
            <Corner />
            {COLS.map((c, i) => <ColHead key={c} $on={i < 4}>{c}</ColHead>)}
            {ROWS.map(r => (
              <React.Fragment key={r}>
                <RowHead $on={r >= 2 && r <= 4}>{r}</RowHead>
                {COLS.map((c, i) => {
                  const text = DATA[r]?.[i];
                  const sel = r >= 2 && r <= 4 && i < 4 && !(r === 2 && i === 0);
                  return <Cell key={c} $sel={sel} $head={r === 1} $right={i === 0 && r > 1}>{text}</Cell>;
                })}
              </React.Fragment>
            ))}
          </SheetGrid>
          <Selection><FillHandle /></Selection>
          <QuickAnalysis><QuickIcon /></QuickAnalysis>
          <RedFrame />
        </GridWrap>
        <VScroll>
          <ScrollBtn $w={15} $h={15}><Arrow $d="up" /></ScrollBtn>
          <VThumb />
          <Spacer />
          <ScrollBtn $w={15} $h={14}><Arrow $d="down" /></ScrollBtn>
        </VScroll>
      </SheetZone>

      <SheetBar>
        <NavArrow $w={10} $ml={24}><Arrow $d="left" $c="#c6c6c6" /></NavArrow>
        <NavArrow $w={10} $ml={19}><Arrow $d="right" $c="#c6c6c6" /></NavArrow>
        <SheetTab>Sheet1</SheetTab>
        <NavArrow $w={17} $ml={33}><PlusCircle /></NavArrow>
        <NavArrow $w={3} $ml={394}><VDots /></NavArrow>
        <HScroll>
          <ScrollBtn $w={15} $h={14}><Arrow $d="left" /></ScrollBtn>
          <HThumb />
          <HSpacer />
          <ScrollBtn $w={14} $h={14}><Arrow $d="right" /></ScrollBtn>
        </HScroll>
      </SheetBar>

      <StatusBar>
        <span>就绪</span>
        <Stat $ml={19}><MacroIcon /></Stat>
        <Spacer />
        <Stat>平均值: 2</Stat>
        <Stat $ml={16}>计数: 12</Stat>
        <Stat $ml={17}>求和: 6</Stat>
        <ViewBtn $on $ml={20}><NormalView /></ViewBtn>
        <ViewBtn><PageView /></ViewBtn>
        <ViewBtn><BreakView /></ViewBtn>
        <ZoomSign $w={10} $ml={7}>−</ZoomSign>
        <Slider><SliderThumb /></Slider>
        <ZoomSign $w={10} $ml={3}>+</ZoomSign>
        <Percent100>100%</Percent100>
      </StatusBar>

      <Watermark>
        <PawIcon />
        <WmBai>Bai</WmBai>
        <WmDu>du</WmDu>
        <WmJing>经验</WmJing>
        <WmUrl>jingyan.baidu.com</WmUrl>
      </Watermark>
    </Window>
  );
}
